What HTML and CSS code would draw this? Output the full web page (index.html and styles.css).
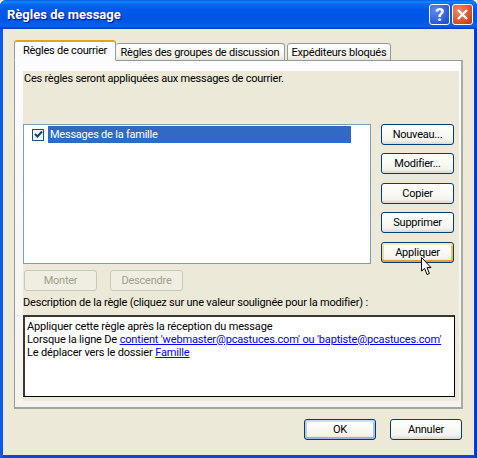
FILE: index.html
```html
<!DOCTYPE html>
<html lang="fr">
<head>
    <meta charset="UTF-8">
    <title>Règles de message</title>
    <link rel="stylesheet" href="styles.css">
</head>
<body>
    <div class="window">
        <!-- Title bar -->
        <div class="titlebar">
            <span class="title">Règles de message</span>
            <div class="title-buttons">
                <div class="title-btn help">?</div>
                <div class="title-btn close">
                    <svg width="13" height="13" viewBox="0 0 13 13">
                        <path d="M2 2 L11 11 M11 2 L2 11" stroke="#fff" stroke-width="2.4" fill="none"/>
                    </svg>
                </div>
            </div>
        </div>

        <div class="client">
            <!-- Tabs -->
            <div class="tabs">
                <div class="tab active">Règles de courrier</div>
                <div class="tab tab-groups">Règles des groupes de discussion</div>
                <div class="tab tab-blocked">Expéditeurs bloqués</div>
            </div>

            <div class="panel">
                <div class="panel-inner">
                    <p class="intro">Ces règles seront appliquées aux messages de courrier.</p>

                    <div class="rules-row">
                        <div class="rule-list">
                            <div class="rule-item">
                                <span class="checkbox">
                                    <svg width="9" height="9" viewBox="0 0 9 9">
                                        <path d="M1 4 L3.5 6.5 L8 1.5" stroke="#1c3a70" stroke-width="2" fill="none"/>
                                    </svg>
                                </span>
                                <span class="rule-name">Messages de la famille</span>
                            </div>
                        </div>
                        <div class="side-buttons">
                            <button class="btn">Nouveau...</button>
                            <button class="btn">Modifier...</button>
                            <button class="btn">Copier</button>
                            <button class="btn">Supprimer</button>
                            <button class="btn focused">Appliquer</button>
                        </div>
                    </div>

                    <div class="move-buttons">
                        <button class="btn disabled">Monter</button>
                        <button class="btn disabled">Descendre</button>
                    </div>

                    <p class="desc-label">Description de la règle (cliquez sur une valeur soulignée pour la modifier) :</p>

                    <div class="desc-box">
                        <div>Appliquer cette règle après la réception du message</div>
                        <div>Lorsque la ligne De <a href="#">contient 'webmaster@pcastuces.com' ou 'baptiste@pcastuces.com'</a></div>
                        <div>Le déplacer vers le dossier <a href="#">Famille</a></div>
                    </div>
                </div>
            </div>

            <!-- Dialog buttons -->
            <div class="dialog-buttons">
                <button class="btn default">OK</button>
                <button class="btn">Annuler</button>
            </div>
        </div>

        <svg class="cursor" width="13" height="19" viewBox="0 0 13 19">
            <path d="M0.5 0.5 L0.5 14 L3.6 11.4 L6 17.5 L8.4 16.5 L6 10.6 L10 10.6 Z" fill="#fff" stroke="#000" stroke-width="1"/>
        </svg>
    </div>
</body>
</html>
```

FILE: styles.css
```css
/* body */
body {
    margin: 0;
    padding: 0;
    background-color: #fff;
    font-family: Roboto, "Liberation Sans", sans-serif;
    font-size: 11px;
    letter-spacing: -0.23px;
    color: #000;
}

p {
    margin: 0;
}

/* Window */
.window {
    position: relative;
    width: 477px;
    height: 458px;
    box-sizing: border-box;
    padding: 0 3px 3px;
    display: flex;
    flex-direction: column;
    border-radius: 6px 6px 0 0;
    background: linear-gradient(to right, #0855dd 0, #0a5cf0 1px, #0a5cf0 2px, #0a46d8 3px, #0a46d8 474px, #0a3bc8 475px, #0031b0 477px);
    overflow: hidden;
}

/* Title bar */
.titlebar {
    height: 29px;
    margin: 0 -3px;
    padding: 0 4px 0 7px;
    display: flex;
    justify-content: space-between;
    align-items: center;
    flex-shrink: 0;
    background: linear-gradient(to bottom, #0a5ae0 0, #0a8af8 2px, #0a68f0 4px, #0058e8 10px, #0055e4 20px, #0062f0 26px, #0048d8 28px, #0038b8 29px);
}

.title {
    color: #fff;
    font-size: 13px;
    font-weight: bold;
    letter-spacing: 0;
    text-shadow: 1px 1px 1px #0f1089;
}

.title-buttons {
    display: flex;
    gap: 2px;
}

.title-btn {
    width: 21px;
    height: 21px;
    box-sizing: border-box;
    border: 1px solid #fff;
    border-radius: 3px;
    display: flex;
    align-items: center;
    justify-content: center;
    color: #fff;
}

.help {
    background: radial-gradient(circle at 30% 30%, #5e8cf2, #2a5ad8 70%, #2048c0);
    font-size: 18px;
    font-weight: bold;
}

.close {
    background: radial-gradient(circle at 30% 30%, #ec8a6c, #d9532c 60%, #b8320e);
}

/* Client area */
.client {
    flex: 1;
    padding: 11px 11px 0;
    background-color: #ece9d8;
    display: flex;
    flex-direction: column;
}

/* Tabs */
.tabs {
    display: flex;
    align-items: flex-end;
    height: 21px;
    position: relative;
    z-index: 1;
}

.tab {
    height: 18px;
    box-sizing: border-box;
    border: 1px solid #919b9c;
    border-bottom: none;
    border-radius: 3px 3px 0 0;
    background: linear-gradient(to bottom, #fff, #f6f5f0 70%, #e6e3d6);
    line-height: 17px;
    text-align: center;
    white-space: nowrap;
}

.tab.active {
    width: 102px;
    height: 21px;
    border-top: 2px solid #e8a020;
    border-bottom: 1px solid #fcfcfe;
    background: #fcfcfe;
    line-height: 17px;
}

.tab-groups {
    width: 169px;
    border-left: none;
    border-bottom: 1px solid #919b9c;
}

.tab-blocked {
    width: 104px;
    margin-left: 2px;
    border-bottom: 1px solid #919b9c;
}

/* Panel */
.panel {
    height: 349px;
    margin-top: -1px;
    box-sizing: border-box;
    border: 1px solid #919b9c;
    border-right: 2px solid #a8aca4;
    border-bottom: 2px solid #a0a49c;
    padding: 10px 2px 6px 8px;
    background: linear-gradient(to bottom, #fcfcfe, #f4f3ee);
}

.panel-inner {
    height: 100%;
    background-color: #ece9d8;
    display: flex;
    flex-direction: column;
}

.intro {
    height: 53px;
    padding: 1px 0 0 1px;
    box-sizing: border-box;
}

.rules-row {
    display: flex;
    gap: 10px;
    height: 140px;
}

.rule-list {
    width: 348px;
    box-sizing: border-box;
    padding: 1px 0 0 8px;
    border: 1px solid #7f9db9;
    background-color: #fff;
}

.rule-item {
    display: flex;
    align-items: center;
    gap: 4px;
}

.checkbox {
    width: 12px;
    height: 12px;
    box-sizing: border-box;
    border: 1px solid #1c5180;
    background-color: #f4f4ec;
    display: flex;
    align-items: center;
    justify-content: center;
    flex-shrink: 0;
}

.rule-name {
    width: 301px;
    height: 17px;
    padding-left: 2px;
    line-height: 17px;
    background-color: #316ac5;
    color: #fff;
}

.side-buttons {
    display: flex;
    flex-direction: column;
    gap: 8px;
}

/* Buttons */
.btn {
    width: 73px;
    height: 21px;
    padding: 0;
    border: 1px solid #003c74;
    border-radius: 3px;
    background: linear-gradient(to bottom, #fff, #f4f4ee 80%, #dcd8cc);
    font-family: inherit;
    font-size: 11px;
    letter-spacing: inherit;
    color: #000;
}

.side-buttons .btn:nth-child(3),
.side-buttons .btn:nth-child(5) {
    margin-top: 1px;
}

.btn.focused {
    box-shadow: inset 0 2px 0 #fde9c0, inset 0 -2px 0 #e8a030, inset 2px 0 0 #fbd890, inset -2px 0 0 #f2bc58;
}

.btn.default {
    box-shadow: inset 0 2px 0 #cedcf5, inset 0 -2px 0 #98b4e4, inset 2px 0 0 #b8cdf0, inset -2px 0 0 #a8c0ea;
}

.btn.disabled {
    border-color: #c9c7ba;
    background: #f0eee2;
    color: #a19f90;
}

.move-buttons {
    display: flex;
    gap: 13px;
    margin: 6px 0 0 1px;
}

.desc-label {
    height: 24px;
    padding: 5px 0 0 0;
    box-sizing: border-box;
    letter-spacing: -0.2px;
}

.desc-box {
    width: 432px;
    height: 82px;
    box-sizing: border-box;
    border: 1px solid #000;
    border-top: 2px solid #3a382c;
    border-left: 2px solid #3a382c;
    padding: 3px 0 0 2px;
    background-color: #fff;
    line-height: 13px;
    letter-spacing: -0.16px;
    white-space: nowrap;
}

.desc-box a {
    color: #0000ff;
}

/* Dialog buttons */
.dialog-buttons {
    display: flex;
    justify-content: flex-end;
    gap: 14px;
    margin: 10px 1px 0 0;
}

.dialog-buttons .btn {
    width: 72px;
}

/* Mouse pointer */
.cursor {
    position: absolute;
    left: 421px;
    top: 257px;
}
```
